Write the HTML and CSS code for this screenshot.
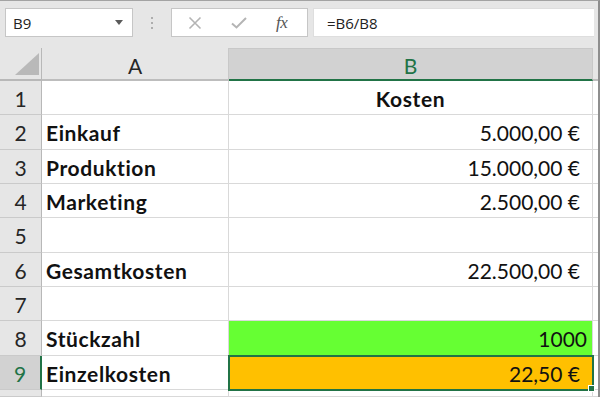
FILE: index.html
```html
<!DOCTYPE html>
<html lang="de">
<head>
<meta charset="utf-8">
<title>Kosten</title>
<link rel="stylesheet" href="styles.css">
</head>
<body>
<div class="frame">
  <div class="toolbar">
    <div class="namebox">
      <span class="name">B9</span>
      <svg class="drop" width="8" height="5" viewBox="0 0 8 5"><path d="M0 0H8L4 5Z" fill="#5a5a5a"/></svg>
    </div>
    <div class="sep"><span></span><span></span><span></span></div>
    <div class="iconbox">
      <svg class="ico" width="14" height="14" viewBox="0 0 14 14"><path d="M1.5 1.5L12.5 12.5M12.5 1.5L1.5 12.5" stroke="#b4b4b4" stroke-width="1.6" fill="none"/></svg>
      <svg class="ico" width="16" height="12" viewBox="0 0 16 12"><path d="M1 6.5L5.5 10.5L15 1" stroke="#b4b4b4" stroke-width="2" fill="none"/></svg>
      <span class="fx">fx</span>
    </div>
    <div class="formula">=B6/B8</div>
    <div class="toolpad"></div>
  </div>
  <div class="sheet">
    <div class="corner"><svg width="24" height="22" viewBox="0 0 24 22"><path d="M24 0V22H0Z" fill="#b9b9b9"/></svg></div>
    <div class="colhdr">A</div>
    <div class="colhdr sel">B</div>
    <div class="colhdr rest"></div>

    <div class="rowhdr">1</div><div class="cell"></div><div class="cell b center bold">Kosten</div><div class="cell rest"></div>
    <div class="rowhdr">2</div><div class="cell bold">Einkauf</div><div class="cell b num">5.000,00 €</div><div class="cell rest"></div>
    <div class="rowhdr">3</div><div class="cell bold">Produktion</div><div class="cell b num">15.000,00 €</div><div class="cell rest"></div>
    <div class="rowhdr">4</div><div class="cell bold">Marketing</div><div class="cell b num">2.500,00 €</div><div class="cell rest"></div>
    <div class="rowhdr">5</div><div class="cell"></div><div class="cell b"></div><div class="cell rest"></div>
    <div class="rowhdr">6</div><div class="cell bold">Gesamtkosten</div><div class="cell b num">22.500,00 €</div><div class="cell rest"></div>
    <div class="rowhdr">7</div><div class="cell"></div><div class="cell b"></div><div class="cell rest"></div>
    <div class="rowhdr">8</div><div class="cell bold">Stückzahl</div><div class="cell b int green">1000</div><div class="cell rest"></div>
    <div class="rowhdr selrow">9</div><div class="cell bold">Einzelkosten</div><div class="cell b num orange active">22,50 €</div><div class="cell rest"></div>
    <div class="rowhdr"></div><div class="cell"></div><div class="cell b"></div><div class="cell rest"></div>
  </div>
</div>
</body>
</html>
```
FILE: styles.css
```css
html, body {
  margin: 0;
  padding: 0;
  background: #ffffff;
}
.frame {
  width: 600px;
  height: 397px;
  box-sizing: border-box;
  border-top: 1px solid #a3a3a3;
  border-right: 2px solid #8e8e8e;
  overflow: hidden;
  background: #e6e6e6;
  display: flex;
  flex-direction: column;
  font-family: Lato, "Open Sans", sans-serif;
}
.toolbar {
  height: 47px;
  flex: none;
  display: flex;
  align-items: flex-start;
  padding-top: 7px;
  box-sizing: border-box;
  background: #e6e6e6;
}
.namebox {
  margin-left: 5px;
  width: 128px;
  height: 29px;
  box-sizing: border-box;
  background: #fff;
  border: 1px solid #c6c6c6;
  display: flex;
  align-items: center;
  justify-content: space-between;
  padding: 0 9px 0 7px;
  font-family: "Open Sans", sans-serif;
  font-size: 15px;
  color: #222;
}
.drop { display: block; }
.sep {
  width: 38px;
  height: 29px;
  display: flex;
  flex-direction: column;
  align-items: center;
  justify-content: center;
  gap: 3px;
}
.sep span {
  width: 2px;
  height: 2px;
  background: #9a9a9a;
  border-radius: 1px;
}
.iconbox {
  width: 137px;
  height: 29px;
  box-sizing: border-box;
  background: #fff;
  border: 1px solid #c6c6c6;
  display: flex;
  align-items: center;
  padding-left: 16px;
  gap: 0;
}
.iconbox .ico:first-child { margin-right: 29px; }
.iconbox .ico:nth-child(2) { margin-right: 29px; }
.fx {
  font-family: "Liberation Serif", serif;
  font-style: italic;
  font-size: 17px;
  color: #555;
  letter-spacing: -0.5px;
}
.formula {
  margin-left: 5px;
  width: 281px;
  height: 29px;
  box-sizing: border-box;
  background: #fff;
  border: 1px solid #dedede;
  border-right: none;
  display: flex;
  align-items: center;
  padding-left: 13px;
  font-family: "Open Sans", sans-serif;
  font-size: 15px;
  color: #222;
}
.toolpad { flex: 1; }

.sheet {
  flex: 1;
  display: grid;
  grid-template-columns: 42px 187px 364px 1fr;
  grid-template-rows: 33px repeat(9, 34.33px) 1fr;
  background: #fff;
}
.corner {
  background: #e6e6e6;
  border-right: 1px solid #b8b8b8;
  border-bottom: 2px solid #b8b8b8;
  box-sizing: border-box;
  display: flex;
  align-items: flex-end;
  justify-content: flex-end;
  padding: 0 2px 4px 0;
}
.corner svg { display: block; }
.colhdr {
  background: #e6e6e6;
  border-right: 1px solid #c8c8c8;
  border-bottom: 2px solid #bdbdbd;
  box-sizing: border-box;
  display: flex;
  align-items: center;
  justify-content: center;
  font-size: 21px;
  color: #262626;
  padding-top: 3px;
}
.colhdr.sel {
  background: #d2d2d2;
  color: #217346;
  border-bottom-color: #217346;
  border-top: 1px solid #c8c8c8;
}
.colhdr.rest { border-right: none; }
.rowhdr {
  background: #e6e6e6;
  border-right: 1px solid #b8b8b8;
  border-bottom: 1px solid #cacaca;
  box-sizing: border-box;
  display: flex;
  align-items: center;
  justify-content: center;
  font-size: 21px;
  color: #262626;
  padding-top: 2px;
}
.rowhdr.selrow {
  background: #d2d2d2;
  color: #217346;
  border-right: 2px solid #217346;
}
.cell {
  border-right: 1px solid #d9d9d9;
  border-bottom: 1px solid #d9d9d9;
  box-sizing: border-box;
  display: flex;
  align-items: center;
  padding: 2px 4px 0 4px;
  font-size: 21px;
  color: #111;
  white-space: nowrap;
}
.cell.rest { border-right: none; }
.bold { font-weight: 700; letter-spacing: 0.6px; }
.center { justify-content: center; }
.num { justify-content: flex-end; padding-right: 12px; }
.int { justify-content: flex-end; padding-right: 5px; }
.green { background: #66ff33; }
.orange { background: #ffc000; }
.active {
  position: relative;
  outline: 2px solid #217346;
  outline-offset: -1px;
}
.active::after {
  content: "";
  position: absolute;
  right: -3px;
  bottom: -3px;
  width: 5px;
  height: 5px;
  background: #217346;
  border: 1px solid #fff;
}
```
